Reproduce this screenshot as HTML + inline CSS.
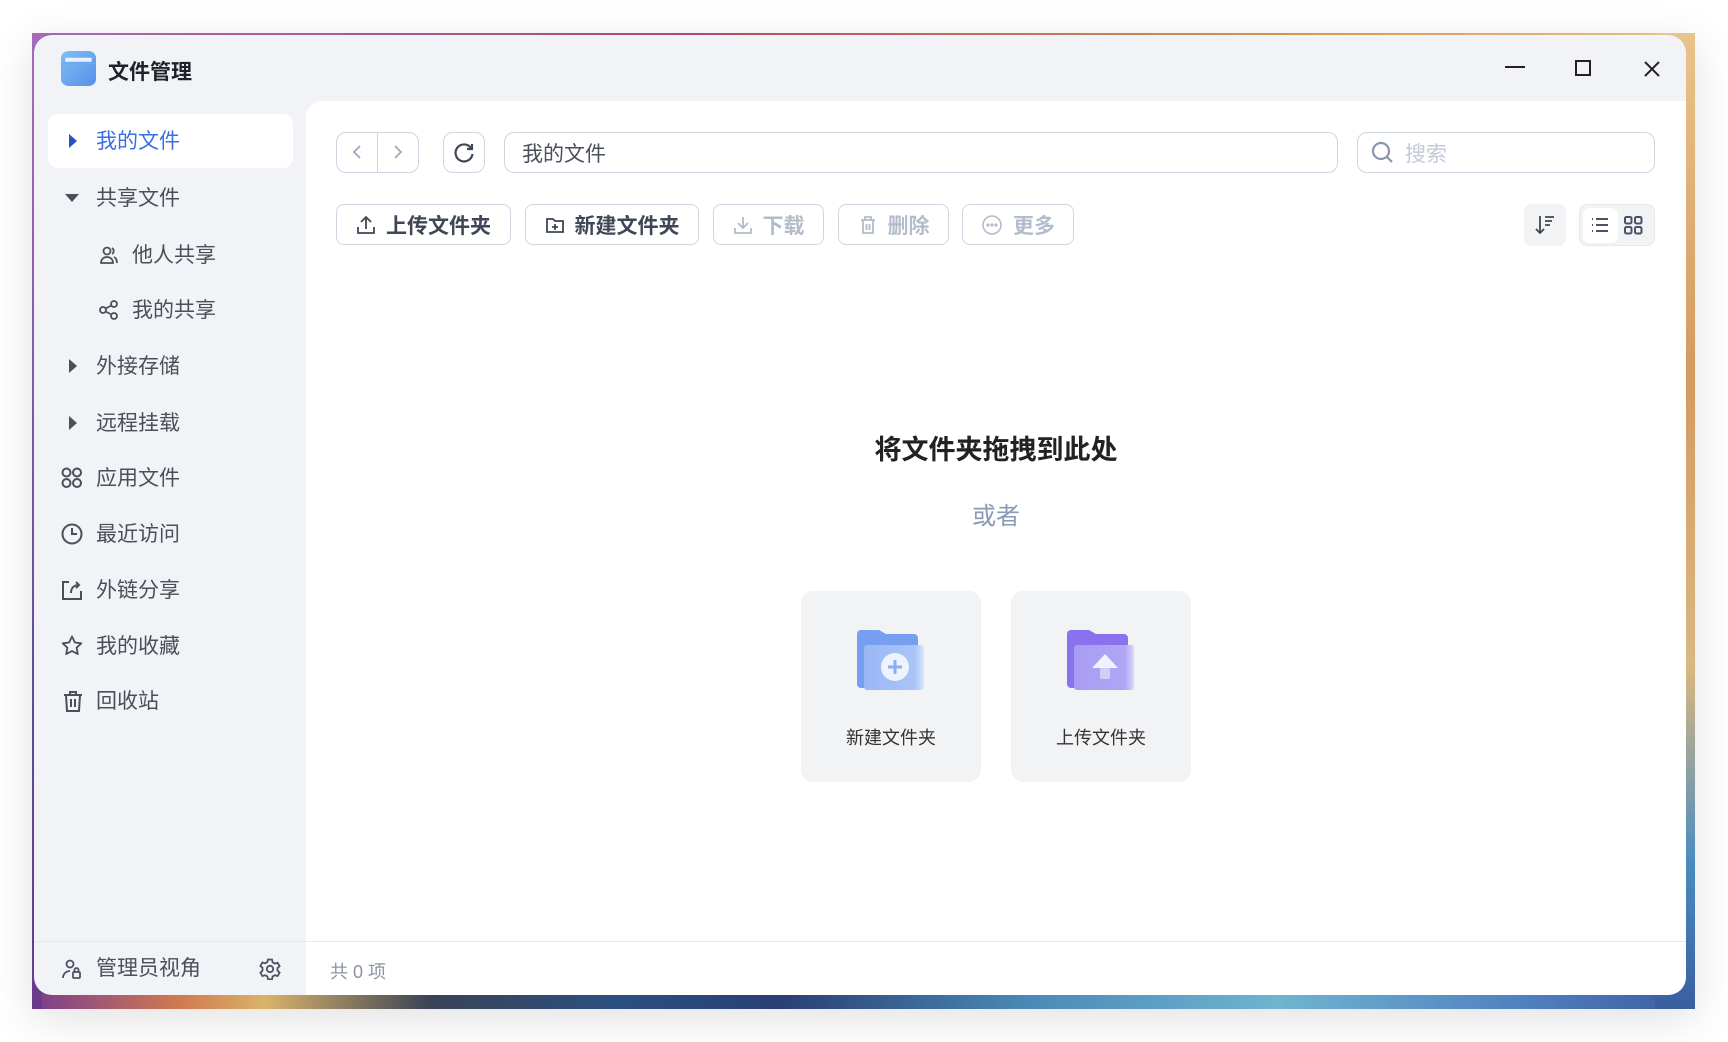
<!DOCTYPE html>
<html><head><meta charset="utf-8"><style>
*{margin:0;padding:0;box-sizing:border-box}
body{width:1728px;height:1042px;background:#fff;font-family:"Liberation Sans","Noto Sans CJK SC",sans-serif;position:relative;overflow:hidden}
.frame{position:absolute;left:32px;top:33px;width:1663px;height:976px;box-shadow:0 10px 40px rgba(0,0,0,.12);
background:linear-gradient(90deg,#7a3d8e 0%,#d27a4f 9%,#d9b36a 14%,#3a4256 24%,#2b5080 35%,#2a3f72 45%,#4a8ab8 60%,#6fb4d0 75%,#4f7fc0 90%,#3d5ca0 100%);}
.frame:before{content:"";position:absolute;left:0;top:0;right:0;height:700px;background:linear-gradient(90deg,#a866b8 0%,#b04a6a 40%,#d8924f 75%,#e8c27f 100%);}
.frame:after{content:"";position:absolute;right:0;top:0;width:40px;height:976px;background:linear-gradient(180deg,#e8c48a 0%,#d49a60 35%,#d9b880 65%,#4a8cc0 85%,#3a5ea0 100%);}
.lstrip{position:absolute;left:32px;top:33px;width:10px;height:976px;background:linear-gradient(180deg,#a86ab8,#5a4aa0 70%,#6a3a8a);z-index:1}
.win{position:absolute;left:34px;top:35px;width:1652px;height:960px;background:#f2f3f7;border-radius:18px;overflow:hidden;z-index:2}
.abs{position:absolute}
.main{position:absolute;left:272px;top:66px;right:0;bottom:0;background:#fff;border-top-left-radius:16px}
.foot{position:absolute;left:0;right:0;top:906px;border-top:1px solid #e6e8ee}
.si{position:absolute;font-size:21px;color:#4a4f5a;line-height:24px}
.btn{position:absolute;border:1px solid #cfd6e2;border-radius:8px;background:#fff;height:41px;display:flex;align-items:center;justify-content:center;gap:10px;font-size:21px;font-weight:bold;color:#3f4656}
.dis{color:#b3bccb}
.card{position:absolute;top:556px;width:180px;height:191px;background:#f2f3f5;border-radius:12px}
.card .lb{position:absolute;left:0;right:0;top:133px;text-align:center;font-size:18px;color:#333}
</style></head><body>
<div class="frame"></div><div class="lstrip"></div>
<div class="win">
 <svg class="abs" style="left:27px;top:16px" width="35" height="35" viewBox="0 0 32 36" preserveAspectRatio="none"><defs><linearGradient id="g1" x1="0" y1="0" x2="1" y2="1"><stop offset="0" stop-color="#7dc0f5"/><stop offset="1" stop-color="#5a8ee8"/></linearGradient></defs><rect x="0" y="0" width="32" height="36" rx="7" fill="url(#g1)"/><path d="M4 7 h24 v4 H4z" fill="#fff" opacity=".85"/><path d="M0 13 h32" stroke="#6fa6ee" stroke-width="1"/></svg>
 <div class="abs" style="left:74px;top:21px;font-size:21px;font-weight:bold;color:#1f2329">文件管理</div>
 <div class="abs" style="left:1471px;top:31px;width:20px;height:2px;background:#222"></div>
 <div class="abs" style="left:1541px;top:25px;width:16px;height:16px;border:2px solid #222"></div>
 <svg class="abs" style="left:1609px;top:25px" width="18" height="18"><path d="M2 2L16 16M16 2L2 16" stroke="#222" stroke-width="2"/></svg>

 <div class="abs" style="left:14px;top:79px;width:245px;height:54px;background:#fff;border-radius:10px"></div>
 <svg class="abs" style="left:34px;top:98px" width="10" height="16"><path d="M1 1L9 8L1 15Z" fill="#2b4fc9"/></svg>
 <div class="si" style="left:62px;top:95px;color:#3b6fe0">我的文件</div>
 <svg class="abs" style="left:30px;top:158px" width="16" height="10"><path d="M1 1H15L8 9Z" fill="#4a4f5a"/></svg>
 <div class="si" style="left:62px;top:152px">共享文件</div>
 <svg class="abs" style="left:65px;top:210px" width="20" height="20" fill="none" stroke="#4a4f5a" stroke-width="1.8"><circle cx="8" cy="6" r="3.5"/><path d="M2 18c0-4 3-6 6-6s6 2 6 6z"/><path d="M13 3a3.5 3.5 0 010 6M15 12c2 1 3 3 3 6"/></svg>
 <div class="si" style="left:98px;top:209px">他人共享</div>
 <svg class="abs" style="left:65px;top:265px" width="20" height="20" fill="none" stroke="#4a4f5a" stroke-width="1.8"><circle cx="4" cy="10" r="3"/><circle cx="15" cy="4" r="3"/><circle cx="15" cy="16" r="3"/><path d="M6.5 8.5L12.5 5.5M6.5 11.5L12.5 14.5"/></svg>
 <div class="si" style="left:98px;top:264px">我的共享</div>
 <svg class="abs" style="left:34px;top:323px" width="10" height="16"><path d="M1 1L9 8L1 15Z" fill="#4a4f5a"/></svg>
 <div class="si" style="left:62px;top:320px">外接存储</div>
 <svg class="abs" style="left:34px;top:380px" width="10" height="16"><path d="M1 1L9 8L1 15Z" fill="#4a4f5a"/></svg>
 <div class="si" style="left:62px;top:377px">远程挂载</div>
 <svg class="abs" style="left:27px;top:432px" width="22" height="22" fill="none" stroke="#4a4f5a" stroke-width="2"><circle cx="5.5" cy="5.5" r="4"/><circle cx="16" cy="5.5" r="4"/><circle cx="5.5" cy="16" r="4"/><circle cx="16" cy="16" r="4"/></svg>
 <div class="si" style="left:62px;top:432px">应用文件</div>
 <svg class="abs" style="left:27px;top:488px" width="22" height="22" fill="none" stroke="#4a4f5a" stroke-width="2"><circle cx="11" cy="11" r="9.5"/><path d="M11 5v6h5"/></svg>
 <div class="si" style="left:62px;top:488px">最近访问</div>
 <svg class="abs" style="left:27px;top:544px" width="22" height="22" fill="none" stroke="#4a4f5a" stroke-width="2"><path d="M8 3H2v17h18v-8"/><path d="M10 14c0-5 3-8 8-8M15 3l3 3-3 3"/></svg>
 <div class="si" style="left:62px;top:544px">外链分享</div>
 <svg class="abs" style="left:27px;top:600px" width="22" height="22" fill="none" stroke="#4a4f5a" stroke-width="1.8" stroke-linejoin="round"><path d="M11 1.5l2.9 6 6.4.8-4.7 4.4 1.2 6.4L11 16l-5.8 3.1 1.2-6.4L1.7 8.3l6.4-.8z"/></svg>
 <div class="si" style="left:62px;top:600px">我的收藏</div>
 <svg class="abs" style="left:29px;top:655px" width="20" height="22" fill="none" stroke="#4a4f5a" stroke-width="2"><path d="M1 5h18M7 5V2h6v3M3 5l1 16h12l1-16M8 9v8M12 9v8"/></svg>
 <div class="si" style="left:62px;top:655px">回收站</div>

 <div class="main">
  <div class="btn" style="left:30px;top:31px;width:83px;border-radius:10px;justify-content:flex-start;gap:0">
   <svg width="40" height="39"><path d="M23 13l-6 6 6 6" fill="none" stroke="#a0a9b8" stroke-width="1.8"/></svg>
   <div style="width:1px;height:39px;background:#cfd6e2"></div>
   <svg width="40" height="39"><path d="M17 13l6 6-6 6" fill="none" stroke="#a0a9b8" stroke-width="1.8"/></svg>
  </div>
  <div class="btn" style="left:137px;top:31px;width:42px;border-radius:10px">
   <svg width="22" height="22" fill="none" stroke="#3f4656" stroke-width="2.2"><path d="M18 6A8.5 8.5 0 1 0 19.5 12"/><path d="M19 2v5h-5"/></svg></div>
  <div class="btn" style="left:198px;top:31px;width:834px;border-radius:10px;justify-content:flex-start;padding-left:17px;font-weight:normal;color:#4a4f5a">我的文件</div>
  <div class="btn" style="left:1051px;top:31px;width:298px;border-radius:10px;justify-content:flex-start;padding-left:13px;font-weight:normal;color:#c3cad6;gap:10px">
   <svg width="24" height="24" fill="none" stroke="#8a96ad" stroke-width="2.2"><circle cx="10" cy="10" r="8"/><path d="M16 16l5 5"/></svg>搜索</div>

  <div class="btn" style="left:30px;top:103px;width:175px">
   <svg width="20" height="20" fill="none" stroke="#3f4656" stroke-width="1.8"><path d="M10 14V2M5 7l5-5 5 5M2 12v6h16v-6"/></svg>上传文件夹</div>
  <div class="btn" style="left:219px;top:103px;width:174px">
   <svg width="20" height="20" fill="none" stroke="#3f4656" stroke-width="1.8"><path d="M2 4h6l2 2h8v11H2z"/><path d="M10 9v6M7 12h6"/></svg>新建文件夹</div>
  <div class="btn dis" style="left:407px;top:103px;width:111px">
   <svg width="20" height="20" fill="none" stroke="#b3bccb" stroke-width="1.8"><path d="M10 2v11M5 8l5 5 5-5M2 13v5h16v-5"/></svg>下载</div>
  <div class="btn dis" style="left:532px;top:103px;width:111px">
   <svg width="20" height="20" fill="none" stroke="#b3bccb" stroke-width="1.8"><path d="M3 5h14M7 5V2h6v3M5 5v13h10V5M8.5 9v6M11.5 9v6"/></svg>删除</div>
  <div class="btn dis" style="left:656px;top:103px;width:112px">
   <svg width="22" height="22" fill="none" stroke="#b3bccb" stroke-width="1.6"><circle cx="11" cy="11" r="9"/><circle cx="7" cy="11" r=".8" fill="#b3bccb"/><circle cx="11" cy="11" r=".8" fill="#b3bccb"/><circle cx="15" cy="11" r=".8" fill="#b3bccb"/></svg>更多</div>

  <div class="abs" style="left:1218px;top:103px;width:42px;height:42px;background:#f2f3f5;border-radius:8px">
   <svg width="42" height="42" fill="none" stroke="#3f4656" stroke-width="1.8"><path d="M16 12v17M12 25l4 4 4-4M21 13h9M21 17h7M21 21h5"/></svg></div>
  <div class="abs" style="left:1273px;top:103px;width:76px;height:42px;background:#f2f3f5;border:1px solid #e6e8ee;border-radius:8px">
   <div class="abs" style="left:3px;top:3px;width:35px;height:35px;background:#fff;border-radius:7px"></div>
   <svg class="abs" style="left:0;top:0" width="76" height="42" fill="none" stroke="#4a5266" stroke-width="2"><path d="M12 14h1M12 20h1M12 26h1M16 14h12M16 20h12M16 26h12"/><rect x="45" y="12" width="6.5" height="6.5" rx="1.5"/><rect x="55" y="12" width="6.5" height="6.5" rx="1.5"/><rect x="45" y="22" width="6.5" height="6.5" rx="1.5"/><rect x="55" y="22" width="6.5" height="6.5" rx="1.5"/></svg>
  </div>

  <div class="abs" style="left:0;right:0;top:327px;text-align:center;font-size:27px;font-weight:bold;color:#222">将文件夹拖拽到此处</div>
  <div class="abs" style="left:0;right:0;top:395px;text-align:center;font-size:24px;color:#8a9ab3">或者</div>
 </div>
 <div class="card" style="left:767px">
  <svg class="abs" style="left:56px;top:39px" width="70" height="62"><defs><linearGradient id="gb" x1="0" y1="0" x2="1" y2="0"><stop offset="0" stop-color="#9ab8f5"/><stop offset=".85" stop-color="#a9c4f7"/><stop offset="1" stop-color="#dbe6fb"/></linearGradient></defs><path d="M0 4a4 4 0 014-4h18l7 4h28a4 4 0 014 4v50H4a4 4 0 01-4-4z" fill="#76a0ef"/><rect x="7" y="15" width="60" height="45" rx="3" fill="url(#gb)"/><circle cx="38" cy="37" r="14" fill="#eef3fd"/><path d="M38 30v14M31 37h14" stroke="#8aaef3" stroke-width="3"/></svg>
  <div class="lb">新建文件夹</div></div>
 <div class="card" style="left:977px">
  <svg class="abs" style="left:56px;top:39px" width="70" height="62"><defs><linearGradient id="gp" x1="0" y1="0" x2="1" y2="0"><stop offset="0" stop-color="#a79cf3"/><stop offset=".85" stop-color="#b0a6f5"/><stop offset="1" stop-color="#dcd8fb"/></linearGradient></defs><path d="M0 4a4 4 0 014-4h18l7 4h28a4 4 0 014 4v50H4a4 4 0 01-4-4z" fill="#8a72ee"/><rect x="7" y="15" width="60" height="45" rx="3" fill="url(#gp)"/><path d="M38 24l-13 14h26z" fill="#f3f1fe"/><rect x="33" y="38" width="10" height="11" rx="2" fill="#d3cdfa"/></svg>
  <div class="lb">上传文件夹</div></div>

 <div class="foot"></div>
 <svg class="abs" style="left:28px;top:924px" width="20" height="20" fill="none" stroke="#4a5266" stroke-width="1.8"><circle cx="8" cy="5" r="3.5"/><path d="M1 19c0-4 3-7 7-7"/><rect x="11" y="13" width="7" height="6" rx="1"/><path d="M12.5 13v-2a2 2 0 014 0v2"/></svg>
 <div class="si" style="left:62px;top:922px">管理员视角</div>
 <svg class="abs" style="left:225px;top:923px" width="22" height="22" fill="none" stroke="#4a5266" stroke-width="1.8"><path d="M9 1.5h4l.6 2.8 2.3 1.3 2.7-.9 2 3.5-2.1 1.9v2.6l2.1 1.9-2 3.5-2.7-.9-2.3 1.3-.6 2.8H9l-.6-2.8-2.3-1.3-2.7.9-2-3.5 2.1-1.9V9.8L1.4 7.9l2-3.5 2.7.9 2.3-1.3z"/><circle cx="11" cy="11" r="3.2"/></svg>
 <div class="abs" style="left:296px;top:923px;font-size:18px;color:#8a94a6">共 0 项</div>
</div>
</body></html>
